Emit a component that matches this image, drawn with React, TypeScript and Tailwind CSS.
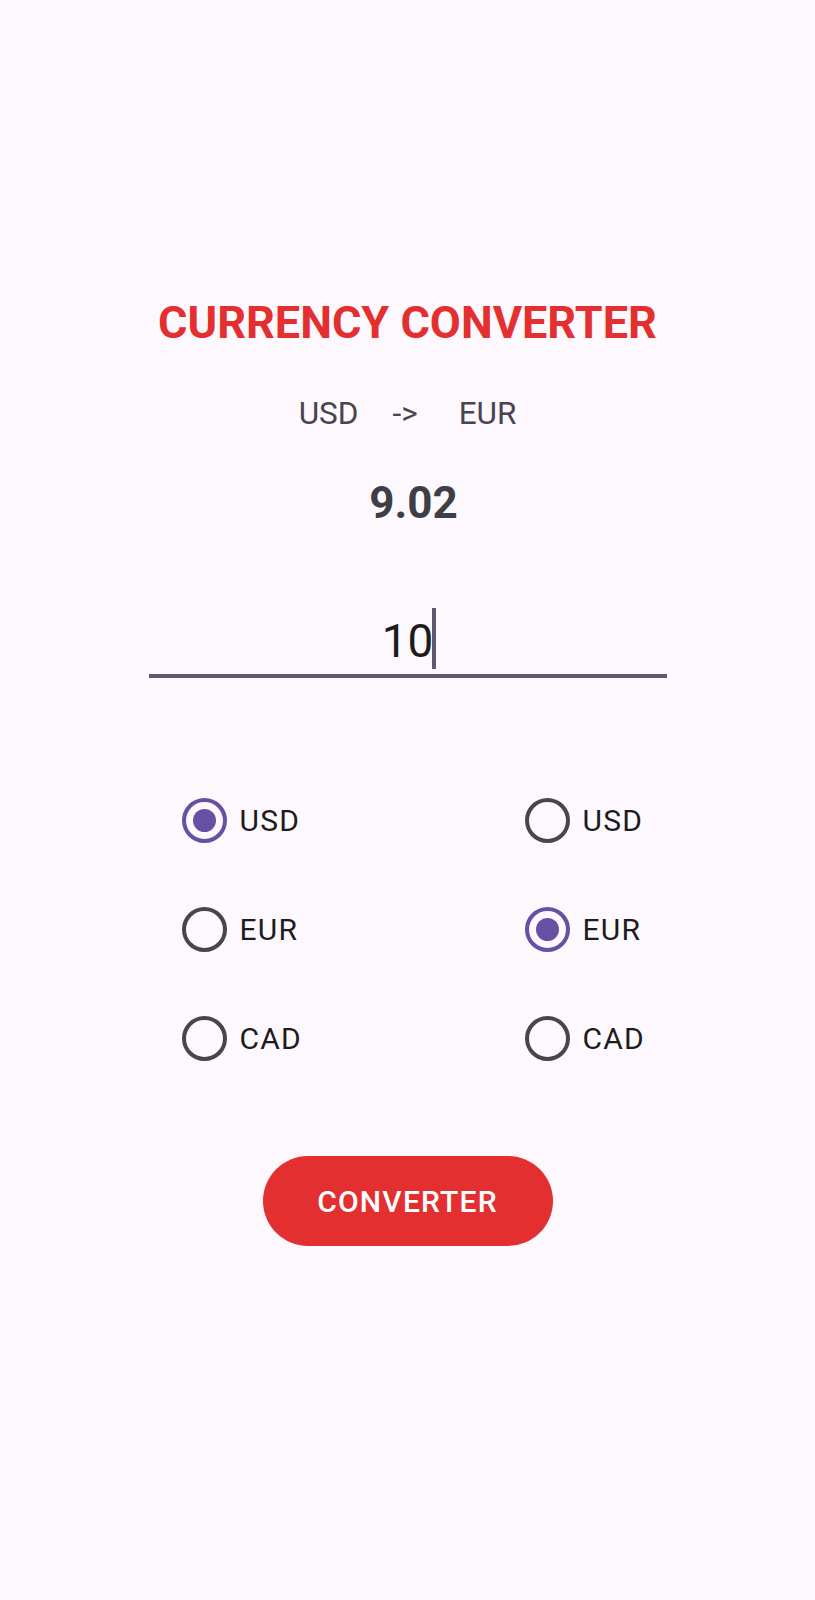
import { useState } from "react";

const currencies = ["USD", "EUR", "CAD"];

function Radio({
  label,
  checked,
  onSelect,
}: {
  label: string;
  checked: boolean;
  onSelect: () => void;
}) {
  return (
    <button
      type="button"
      onClick={onSelect}
      className="flex h-[109px] items-center gap-[13px]"
    >
      <span
        className={
          checked
            ? "flex h-[45px] w-[45px] items-center justify-center rounded-full border-[4px] border-[#6750a4]"
            : "flex h-[45px] w-[45px] items-center justify-center rounded-full border-[4px] border-[#49454f]"
        }
      >
        {checked && <span className="h-[23px] w-[23px] rounded-full bg-[#6750a4]" />}
      </span>
      <span className="text-[30px] leading-none tracking-[1.2px] text-[#1d1b20]">{label}</span>
    </button>
  );
}

export default function App() {
  const [from, setFrom] = useState("USD");
  const [to, setTo] = useState("EUR");
  const [amount] = useState("10");

  return (
    <div className="min-h-[1600px] w-full bg-[#fdf8fd] font-['Roboto',sans-serif]">
      <div className="mx-auto flex w-[518px] flex-col items-center pt-[297px]">
        <h1 className="text-[45px] font-bold leading-[52px] text-[#e32f2f]">
          CURRENCY CONVERTER
        </h1>

        <div className="mt-[45px] flex text-[31.5px] leading-[40px] text-[#49454f]">
          <span>{from}</span>
          <span className="ml-[34px]">-&gt;</span>
          <span className="ml-[41px]">{to}</span>
        </div>

        <p className="mt-[43px] ml-[12px] text-[44px] font-bold leading-[52px] text-[#3f3e45]">
          9.02
        </p>

        {/* amount field */}
        <div className="mt-[84px] flex w-full justify-center border-b-[4px] border-[#5f5a6e] pb-[5px]">
          <div className="relative text-[46px] leading-[56px] text-[#1d1b20]">
            {amount}
            <span className="absolute right-[-3px] top-[-5px] h-[61px] w-[4px] bg-[#5f5a6e]" />
          </div>
        </div>

        {/* currency pickers */}
        <div className="mt-[88px] flex w-full">
          <div className="ml-[33px] flex w-[343px] flex-col items-start">
            {currencies.map((c) => (
              <Radio key={c} label={c} checked={from === c} onSelect={() => setFrom(c)} />
            ))}
          </div>
          <div className="flex flex-col items-start">
            {currencies.map((c) => (
              <Radio key={c} label={c} checked={to === c} onSelect={() => setTo(c)} />
            ))}
          </div>
        </div>

        <button
          type="button"
          className="mt-[63px] h-[90px] w-[290px] rounded-full bg-[#e32f2f] text-[30px] font-medium tracking-[1.2px] text-white"
        >
          CONVERTER
        </button>
      </div>
    </div>
  );
}
